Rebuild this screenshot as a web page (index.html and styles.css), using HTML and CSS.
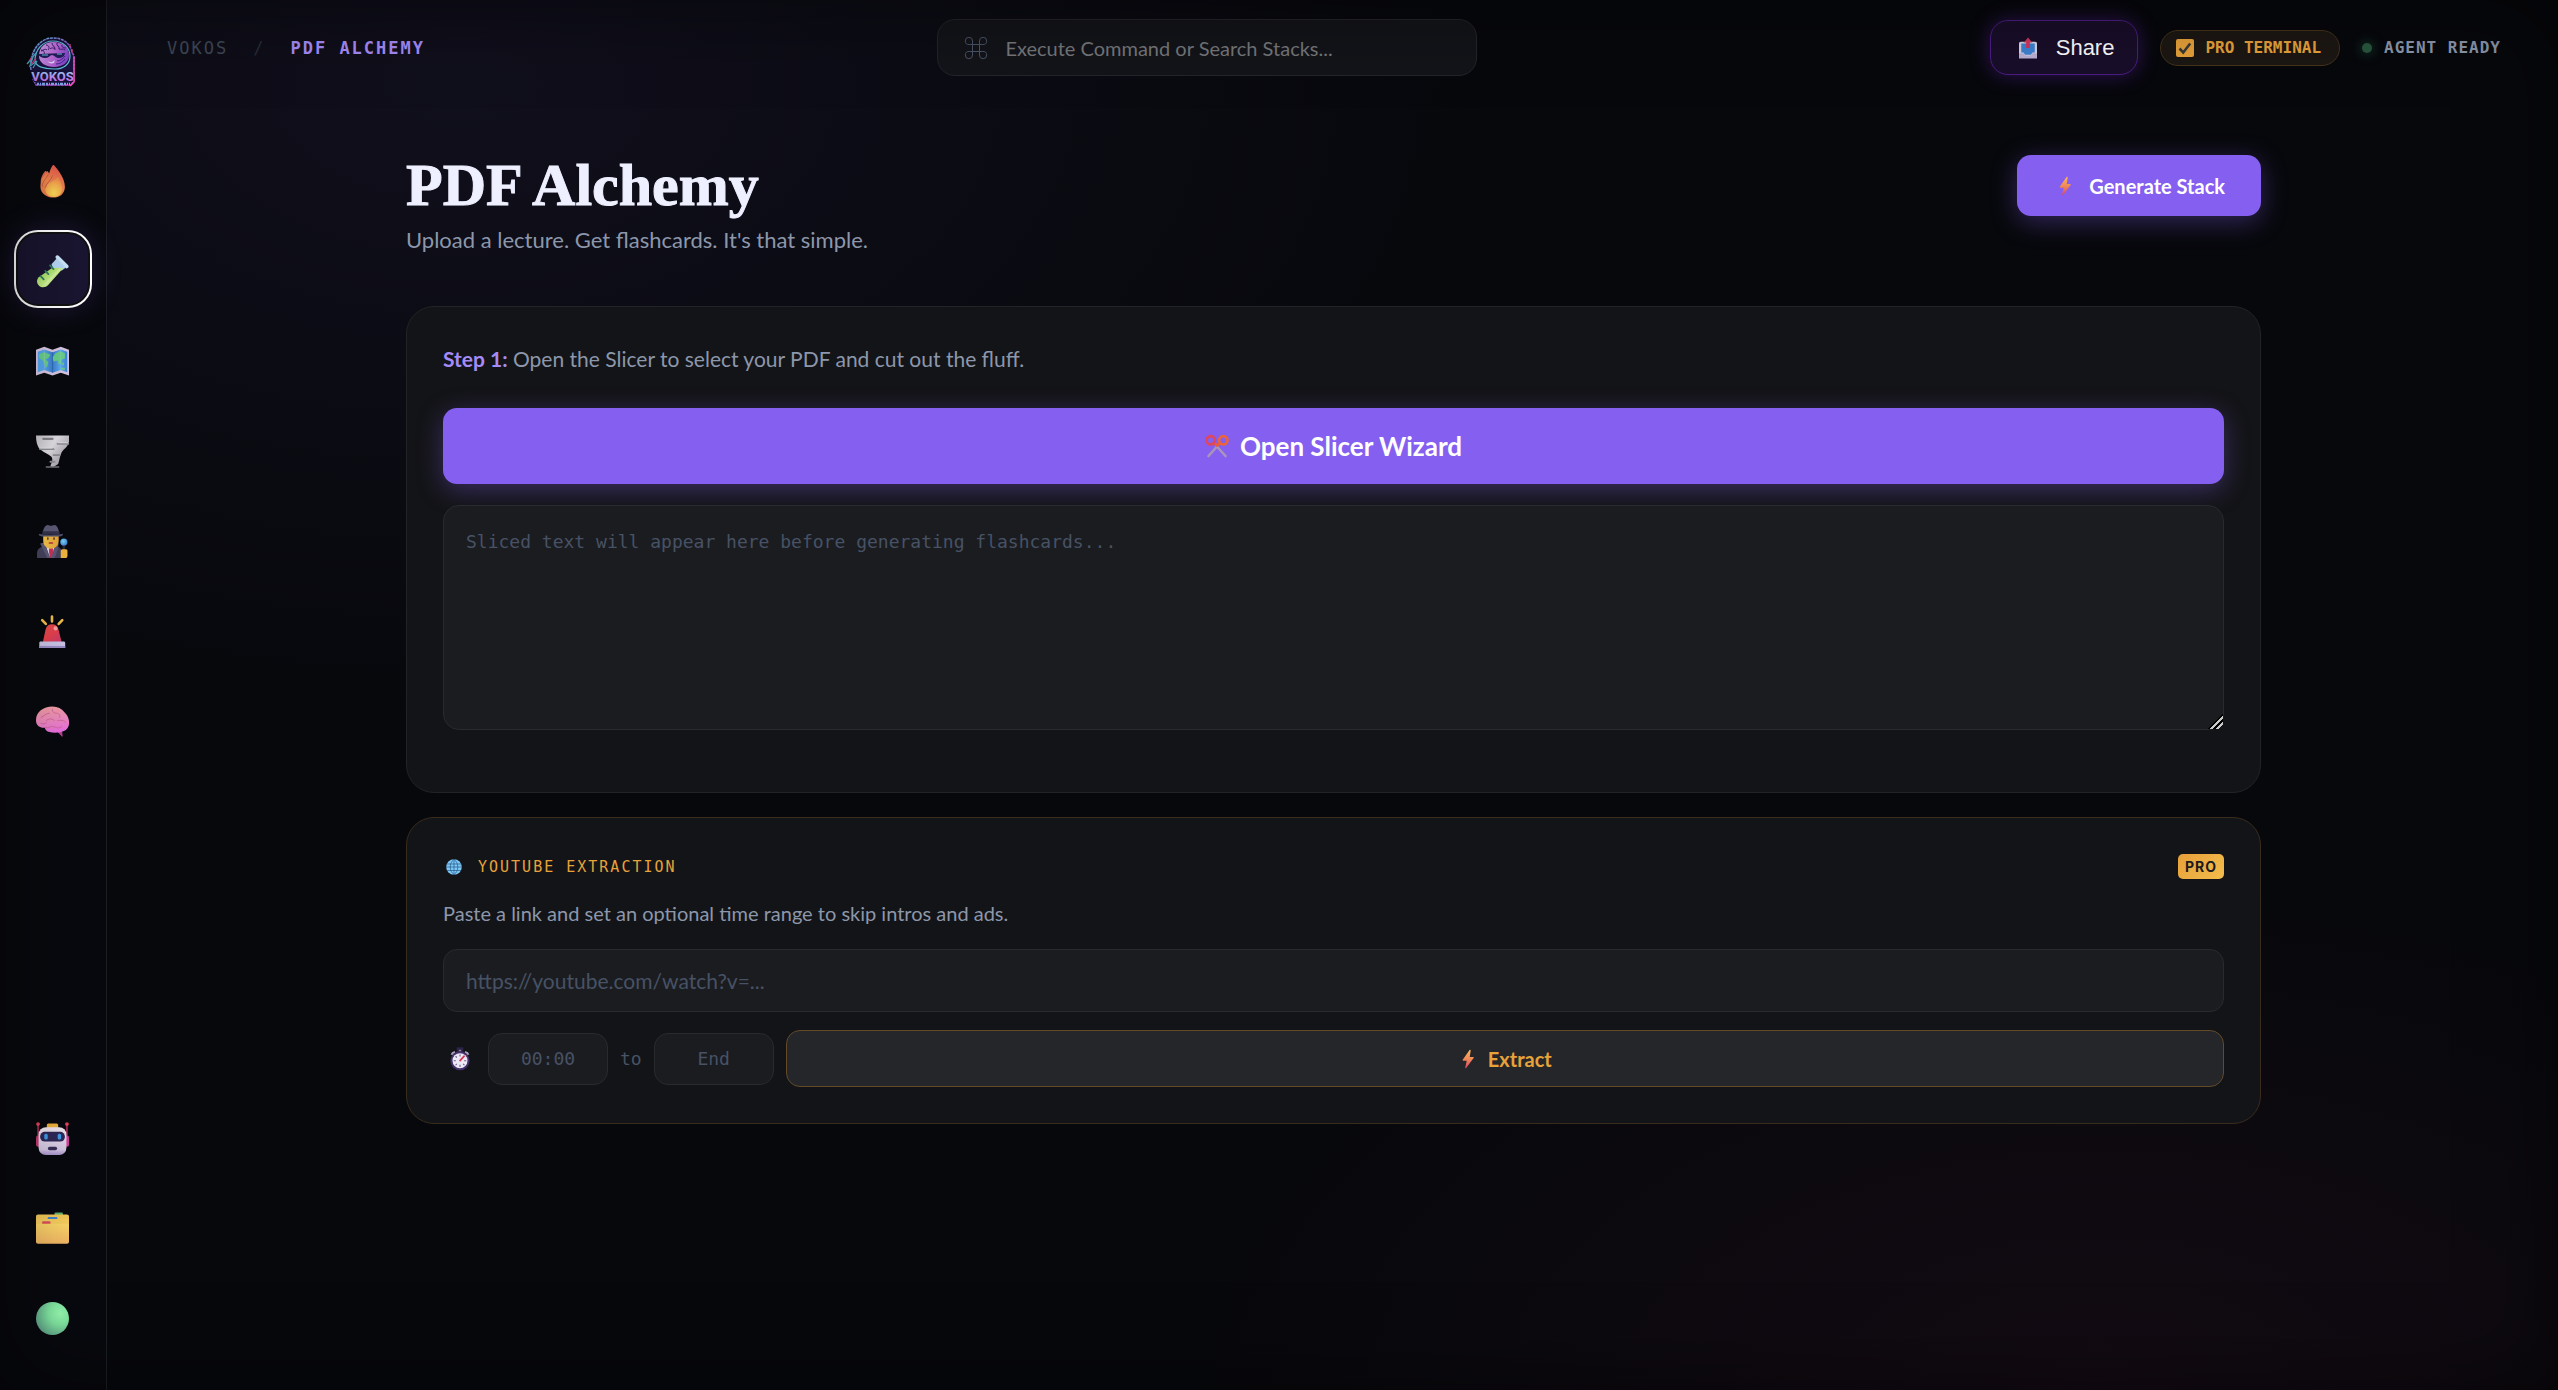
FILE: index.html
```html
<!DOCTYPE html>
<html lang="en">
<head>
<meta charset="utf-8">
<meta name="viewport" content="width=device-width, initial-scale=1">
<title>Vokos / PDF Alchemy</title>
<link rel="stylesheet" href="styles.css">
</head>
<body>
<svg class="defs" width="0" height="0" aria-hidden="true">
  <defs>
    <linearGradient id="boltFill" x1="0" y1="0" x2="0" y2="1"><stop offset="0" stop-color="#fbb85a"/><stop offset=".5" stop-color="#f08a58"/><stop offset="1" stop-color="#dc4468"/></linearGradient>
    <symbol id="bolt" viewBox="0 0 32 32"><path fill="url(#boltFill)" d="M18.500 1.500 7.500 17.300c-.4.700 0 1.400.8 1.400h5.700l-2.500 11c-.2 1.200 1 1.500 1.600.7L25 14.400c.5-.8 0-1.500-.8-1.500h-5.400l1.500-10.400c.1-1.200-1.100-1.800-1.800-1z"/></symbol>
  </defs>
</svg>
<div class="app">
  <aside class="sidebar">
    <a class="logo" href="#" aria-label="Vokos home">
      <svg viewBox="0 0 50 50" width="50" height="50">
        <defs>
          <linearGradient id="lgA" x1="0" y1="0" x2="1" y2="1"><stop offset="0" stop-color="#6fd3ec"/><stop offset=".5" stop-color="#8a62d8"/><stop offset="1" stop-color="#e23fc4"/></linearGradient>
          <linearGradient id="lgB" x1="0" y1="0" x2="1" y2=".3"><stop offset="0" stop-color="#dab0fa"/><stop offset=".6" stop-color="#c46fe2"/><stop offset="1" stop-color="#8a4cd4"/></linearGradient>
          <linearGradient id="lgC" x1="0" y1="0" x2="0" y2="1"><stop offset="0" stop-color="#9ff0ff"/><stop offset=".5" stop-color="#b49aff"/><stop offset="1" stop-color="#f05ce0"/></linearGradient>
        </defs>
        <path d="M5 33C3 27 3 20 8 11 13 3 20 1 27 1c10 0 17 5 19 14l2 4v26l-3 4H10l-3-5z" fill="#1b1442"/>
        <path d="M5 33C4 27 5 20 9 12 14 4 20 1 27 1c10 0 17 5 19 14l2 4v25l-3 4H10l-3-6" fill="none" stroke="url(#lgA)" stroke-width="1.500" stroke-dasharray="3 .7"/>
        <path d="M9 24C9 12 17 4 27 4s17 7 17 15-6 13-15 13S10 30 9 24z" fill="none" stroke="#62cbe8" stroke-width="1.200"/>
        <path d="M13 19C13 10 19 5 27 5c9 0 16 5 16 13 0 7-6 12-15 12-8 0-15-4-15-11z" fill="url(#lgB)"/>
        <path d="M15 14c3-1 4 1 3 3m2-9c3 0 4 3 2 5m4-7c0 3 3 3 3 6m2-6c-1 3 3 3 2 6m3-4c-1 2 2 3 4 3m-16 1c2-2 5-1 5 1m4-1c2 1 4-1 6 1m-24 0c2 1 4-2 6 0" fill="none" stroke="#3b1c6e"/>
        <path d="M12 17l27-1c0 3-3 5-7 5-2 0-4-3-6-3s-3 3-6 3c-5 0-7-2-8-4z" fill="#252061"/>
        <path d="M16 18h6m9-1h5" stroke="#73cfe9" stroke-width="1"/>
        <path d="M21 24c3 2 6 1 8-1l-1 3c-3 1-5 0-7-2z" fill="#e9defb"/>
        <path d="M31 24c4 0 6-3 8-5m-9 8c4 0 7-2 9-5" fill="none" stroke="#4c2491"/>
        <path d="M1 27l6-7-3 9 7-5-4 7m-2-9l5-6" fill="none" stroke="#4db9cf" stroke-width="1.200"/>
        <path d="M3 24l3-4m-1 8l5-7m34-14v3m2 2v4" stroke="#e63f86" stroke-width="1.200"/>
        <path d="M4 33h44v12H8z" fill="#17113a"/>
        <text x="26.500" y="44" text-anchor="middle" class="logo-word" fill="url(#lgC)">VOKOS</text>
        <path d="M11 47h33" stroke="#86a8ee" stroke-width="2.500" stroke-dasharray="2 1 1 1 3 1"/>
        <path d="M48 20v25l-4 4" fill="none" stroke="#f052c4" stroke-width="1.500"/>
      </svg>
    </a>
    <nav class="nav" aria-label="Tools">
      <button class="nav-btn" type="button" aria-label="Streak">
        <svg class="emoji" viewBox="0 0 32 32"><defs><linearGradient id="fi1" x1=".7" y1="0" x2=".3" y2="1"><stop offset="0" stop-color="#e4504c"/><stop offset=".55" stop-color="#ef8a4e"/><stop offset="1" stop-color="#e97b48"/></linearGradient><radialGradient id="fi2" cx=".5" cy=".8" r=".75"><stop offset="0" stop-color="#fbdc57"/><stop offset=".6" stop-color="#f8b050"/><stop offset="1" stop-color="#f08a4e"/></radialGradient></defs>
        <path fill="#d9694c" d="M8.500 6.300c.4-.6 1.400-.6 1.800.3l2.200 4.400-3 14C3 20 3.200 13 8.500 6.300z"/>
        <path fill="url(#fi1)" d="M16 .6c.5-.7 1.200-.7 1.700-.1C22 5.500 28 13 28 21c0 6.500-4.800 10.500-11 10.500S4.300 28 4.300 21c0-6 2.500-9.500 6-14.500.4-.6 1-.6 1.400 0l1 1.700C13.500 6 14.300 3 16 .6z"/>
        <path fill="url(#fi2)" d="M20.500 12c.3-.5.9-.5 1.200 0 2 3.500 3.600 6.500 3.600 10.500 0 5.500-3.600 8.500-8 8.500-4.600 0-8.300-3-8.300-7.500 0-6.500 8-6.500 11.500-11.500z"/>
        <path d="M6 21c0-5 4-8 6-12m-3 13c1-5 6-7 7-12" fill="none" stroke="#c85a45" stroke-width=".9"/></svg>
      </button>
      <button class="nav-btn is-active" type="button" aria-label="PDF Alchemy" aria-current="page">
        <svg class="emoji" viewBox="0 0 32 32"><defs><linearGradient id="tt" x1="0" y1="0" x2="1" y2="1"><stop offset="0" stop-color="#8fcf54"/><stop offset=".6" stop-color="#ccf58a"/><stop offset="1" stop-color="#b2dc70"/></linearGradient></defs>
        <path fill="#b5d8f7" d="M20 3.500l9 8.500-4 3-8-1-2-5z"/>
        <path fill="url(#tt)" d="M15.500 12.500h11L11.800 29.200C9.500 31.700 5.500 32.200 3 29.800S.3 24 2.600 21.500z"/>
        <path fill="#ecfbc5" opacity=".45" d="M22 13h3L9 30l-2-1z"/>
        <path fill="#cce7fb" d="M19 1.200c.8-1.200 2.300-1.200 3.200-.3l8.800 8.800c1 .9.700 2.300-.2 3l-1.500.3L19 3z"/>
        <path d="M4.500 20.500l3 3.200m1.500-8.400l3 3.200m1.500-8.400l3.500 3.600" stroke="#2f7d62" stroke-width="1.700" stroke-linecap="round"/></svg>
      </button>
      <button class="nav-btn" type="button" aria-label="Map">
        <svg class="emoji" viewBox="0 0 32 32"><defs><linearGradient id="mp" x1="0" y1="0" x2="1" y2="0"><stop offset="0" stop-color="#55a7f2"/><stop offset=".25" stop-color="#58a5ea"/><stop offset=".5" stop-color="#3c7fd0"/><stop offset=".75" stop-color="#5aacf5"/><stop offset="1" stop-color="#3f86db"/></linearGradient></defs>
        <path fill="#d8c8e4" d="M0 4.500l8-2.700 8 2.700 8-2.700 8 2.700v25l-8-2.700-8 2.700-8-2.700-8 2.700z"/>
        <path fill="url(#mp)" d="M1.700 6.500L8 4.300l8 2.700 8-2.700 6.300 2.200v20L24 24.300 16 27l-8-2.700-6.300 2.200z"/>
        <path fill="#69d08b" d="M3 9l5-2 6 2.500-2 3-3 1.500 3 2.500-1 4-2 2-1-5-2-3-3-2zM16 12l3-4 5-2 4 2v5l-3 1-1 4-2 1-1-4-4 1zM24 18l3-1v3zM24 22h4v2h-4z"/>
        <path d="M8 4v20m16-20v20" stroke="#fff" stroke-opacity=".15"/><path d="M16 7v20" stroke="#174c98" stroke-opacity=".35"/></svg>
      </button>
      <button class="nav-btn" type="button" aria-label="Tornado">
        <svg class="emoji" viewBox="0 0 32 32"><defs><linearGradient id="to" x1="0" y1="0" x2="1" y2=".6"><stop offset="0" stop-color="#c9c4cc"/><stop offset=".5" stop-color="#e3e0e6"/><stop offset="1" stop-color="#a19ca6"/></linearGradient></defs>
        <path fill="url(#to)" d="M0 0.500h32v6c-1 5-5 7-7 10-2 4-2 7-3.500 11.500L17 31h-2l-1-1c1-3 3-6 1-9-2-2-9-5-12-8C1 10 0 6 0 .5z"/>
        <path d="M7 3.700h9" stroke="#84848a" stroke-width="2.200" stroke-linecap="round"/>
        <path d="M21 8.500h11M4 13.700h13M17 19.500h6M14 26h4" stroke="#8f8f95" stroke-width="1.900" stroke-linecap="round"/>
        <path d="M21 7.500h10M4 12.700h12" stroke="#eceaf0" stroke-width=".8"/>
        <path d="M10 31h12" stroke="#77767c" stroke-width="1.500" stroke-linecap="round"/></svg>
      </button>
      <button class="nav-btn" type="button" aria-label="Detective">
        <svg class="emoji" viewBox="0 0 32 32"><defs><radialGradient id="mg" cx=".4" cy=".4" r=".7"><stop offset="0" stop-color="#79dcfb"/><stop offset="1" stop-color="#3a78d2"/></radialGradient><linearGradient id="fc" x1="0" y1="0" x2="1" y2="0"><stop offset="0" stop-color="#f9c94e"/><stop offset="1" stop-color="#eda93b"/></linearGradient></defs>
        <path fill="#46445f" d="M1 32v-5c0-3 2-5 5-6l2-1h12l3 2c1.500 1 2 3 2 5v5z"/>
        <path fill="#e6e6f2" d="M10 21h8l-2 11h-3z"/><path fill="#c8335c" d="M13 22h3l1 3-1 7h-2.500l-1-7z"/>
        <path fill="#5c5a78" d="M4 18l4-1 6 15h-3L7 24zM22 18l-3-1-4 15h3l3-8z"/>
        <path fill="url(#fc)" d="M7 10h15v5c0 5-3.500 8-7.500 8S7 20 7 15z"/>
        <path d="M11.500 12.500v1.200m6-1.200v1.200" stroke="#4b2c2b" stroke-width="1.400" stroke-linecap="round"/><path d="M13 17.500h3" stroke="#b6323c" stroke-width="1.500" stroke-linecap="round"/>
        <path fill="#5d5c78" d="M6.500 7c1-4 2.500-7 5-7 1.200 0 2 .8 3 .8S16.500 0 18 0c2 0 3.500 3 4.500 7z"/>
        <path fill="#35334e" d="M6.300 6h16.300l.3 3H6z"/>
        <path fill="#51506c" d="M3 8.500c4 1.200 18 1.200 23 0 .8 1-.7 2.600-3 2.600H6c-2.300 0-4-1.500-3-2.600z"/>
        <path d="M27 20v5" stroke="#2a2a3e" stroke-width="2.500"/><circle cx="27" cy="16.500" r="3.500" fill="url(#mg)"/>
        <path fill="#f2b83f" d="M24 25c0-1 1-1.500 2-1.500h3c1 0 1.500.8 1.500 1.500v5c0 1-1 2-2 2H24z"/></svg>
      </button>
      <button class="nav-btn" type="button" aria-label="Alerts">
        <svg class="emoji" viewBox="0 0 32 32"><defs><linearGradient id="si" x1="0" y1="0" x2="1" y2="1"><stop offset="0" stop-color="#e9504a"/><stop offset=".5" stop-color="#e8414e"/><stop offset="1" stop-color="#c7396e"/></linearGradient></defs>
        <path d="M15.500 1.500v4.700M6 5l3.500 3.700M25.500 5L22 8.700" stroke="#f4c04c" stroke-width="2.500" stroke-linecap="round"/>
        <path fill="url(#si)" d="M6.500 27l2.800-13c.8-3.300 3-5 6.200-5s5.500 1.700 6.300 5L25 27z"/>
        <circle cx="19" cy="13" r="2" fill="#ffb2b0" opacity=".85"/>
        <path fill="#cdc6e8" d="M4.500 25.800h22.400c.8 0 1.400.6 1.400 1.400V32H3.200v-4.800c0-.8.500-1.400 1.300-1.400z"/><path fill="#9c8fc8" d="M3.200 30h25.100v2H3.200z"/></svg>
      </button>
      <button class="nav-btn" type="button" aria-label="Brain">
        <svg class="emoji" viewBox="0 0 32 32"><defs><linearGradient id="br" x1=".3" y1="0" x2=".5" y2="1"><stop offset="0" stop-color="#f4a0a4"/><stop offset=".5" stop-color="#f08cbe"/><stop offset="1" stop-color="#ec70e2"/></linearGradient></defs>
        <path fill="#b8409a" d="M19 24l6 6.500c.5.500 1 0 .8-.6L25 23z"/>
        <path fill="url(#br)" d="M0 14.500C0 7 7 1.500 16 1.500c5 0 9 2 12 6 3 3 4.500 7 4 11-.4 4-3 6.500-7 7.500-3 1-8 1.200-12 .2-2.500-.6-4-2-4.500-4.200C4 22.500-.2 20 0 14.500z"/>
        <path d="M5 12c3-1 4-4 8-4m3-4c-1 3 2 4 4 4s4 2 3 4m-13 3c2-2 6-2 8 0m3 0c3 0 6-1 8 2m-20 5c3 1 5-2 8-1s5 2 8 0M5 18c2 1 4 0 5-1" fill="none" stroke="#d4689a" stroke-width=".9" stroke-linecap="round"/></svg>
      </button>
    </nav>
    <nav class="nav nav-bottom" aria-label="Account">
      <button class="nav-btn" type="button" aria-label="Assistant">
        <svg class="emoji" viewBox="0 0 32 32"><defs><linearGradient id="rb" x1="0" y1="0" x2="0" y2="1"><stop offset="0" stop-color="#f0e6ee"/><stop offset=".8" stop-color="#d5c8e4"/><stop offset="1" stop-color="#a893cc"/></linearGradient></defs>
        <path d="M2 2v14M30 2v14" stroke="#b02f5a" stroke-width="1.500"/><circle cx="2" cy="2" r="1.800" fill="#e6405c"/><circle cx="30" cy="2" r="1.800" fill="#e6405c"/>
        <rect x="0" y="13" width="5" height="11" rx="2" fill="#c23a72"/><rect x="27" y="13" width="5" height="11" rx="2" fill="#d2429c"/>
        <rect x="10.500" y="1.500" width="11" height="6" rx="1.500" fill="#eeb13d"/>
        <rect x="2.500" y="5" width="27" height="27" rx="7" fill="url(#rb)"/>
        <rect x="4" y="9.500" width="24" height="9.500" rx="4.500" fill="#2f2858"/>
        <rect x="8" y="11.500" width="3.400" height="5.500" rx="1.500" fill="#3f9be8"/><rect x="21" y="11.500" width="3.400" height="5.500" rx="1.500" fill="#3f9be8"/>
        <rect x="11.500" y="24" width="9" height="3.500" rx="1.700" fill="#3a2f58"/></svg>
      </button>
      <button class="nav-btn" type="button" aria-label="Files">
        <svg class="emoji" viewBox="0 0 32 32"><defs><linearGradient id="fo" x1="0" y1="0" x2="0" y2="1"><stop offset="0" stop-color="#fbd768"/><stop offset="1" stop-color="#f3b765"/></linearGradient></defs>
        <rect x="18" y="0.500" width="8" height="4" rx="1" fill="#5fb46f"/>
        <path fill="#f3c858" d="M2 2.500h28c1.200 0 2 .8 2 2V28H0V4.500c0-1.200.8-2 2-2z"/>
        <rect x="11.500" y="5" width="9" height="4" rx="1" fill="#3f86cf"/>
        <path fill="#f6cd5e" d="M0 8c0-.8.800-1.300 1.600-1.300h28.800c.9 0 1.600.5 1.600 1.300v20H0z"/>
        <rect x="6" y="9" width="8" height="4" rx="1" fill="#e0505c"/>
        <path fill="url(#fo)" d="M0 13c0-.9.700-1.600 1.600-1.600h28.800c.9 0 1.600.7 1.600 1.600v15.500c0 1.300-.9 2.200-2 2.200H2c-1.200 0-2-.9-2-2.200z"/>
        <rect x="11.500" y="5" width="9" height="1.700" fill="#3f86cf"/></svg>
      </button>
      <button class="nav-btn" type="button" aria-label="Status">
        <svg class="emoji" viewBox="0 0 32 32"><defs><radialGradient id="gc" cx=".72" cy=".35" r=".75"><stop offset="0" stop-color="#98fcb2"/><stop offset=".45" stop-color="#82e8a2"/><stop offset="1" stop-color="#62a88c"/></radialGradient></defs><circle cx="16" cy="16" r="16" fill="url(#gc)"/></svg>
      </button>
    </nav>
  </aside>

  <div class="page">
    <header class="topbar">
      <nav class="crumbs" aria-label="Breadcrumb">
        <a href="#">VOKOS</a><span class="sep">/</span><span class="here" aria-current="page">PDF ALCHEMY</span>
      </nav>
      <label class="search">
        <svg class="cmd" viewBox="0 0 24 24" aria-hidden="true"><path d="M8.500 8.500h7v7h-7zM8.500 8.500H5.200A3.600 3.600 0 1 1 8.500 5zM15.500 8.500V5a3.600 3.600 0 1 1 3.300 3.500zM15.500 15.500h3.300a3.600 3.600 0 1 1-3.300 3.500zM8.500 15.500V19a3.600 3.600 0 1 1-3.300-3.500z"/></svg>
        <input type="text" placeholder="Execute Command or Search Stacks..." aria-label="Execute command or search stacks">
      </label>
      <div class="status">
        <button class="share" type="button">
          <svg viewBox="0 0 24 28" width="18" height="22" aria-hidden="true"><path fill="#d9d5e8" d="M0 8c0-1.500 1-2.500 2.500-2.500h19C23 5.500 24 6.500 24 8v19H0z"/><path fill="#3f83d4" d="M3 8h18v12h-3l-2 3H8l-2-3H3z"/><path fill="#bcb3d6" d="M0 21h6l2 3h8l2-3h6v7H0z"/><path fill="#d5365c" d="M12 0l5.500 6.500h-3V14h-5V6.500h-3z"/></svg>
          <span>Share</span>
        </button>
        <span class="pro-pill">
          <svg viewBox="0 0 18 18" width="18" height="18" aria-hidden="true"><rect width="18" height="18" rx="2" fill="#e8a23a"/><path d="M3.500 9.500l3.700 4 7-9" fill="none" stroke="#3d3a36" stroke-width="2.600"/></svg>
          PRO TERMINAL
        </span>
        <span class="agent"><i class="dot"></i>AGENT READY</span>
      </div>
    </header>

    <main class="content">
      <div class="intro">
        <div>
          <h1>PDF Alchemy</h1>
          <p class="lead">Upload a lecture. Get flashcards. It's that simple.</p>
        </div>
        <button class="btn generate" type="button"><svg width="20" height="20" aria-hidden="true"><use href="#bolt"/></svg>Generate Stack</button>
      </div>

      <section class="card">
        <p class="step"><strong>Step 1:</strong> Open the Slicer to select your PDF and cut out the fluff.</p>
        <button class="btn slicer" type="button">
          <svg viewBox="0 0 24 24" width="24" height="24" aria-hidden="true"><path d="M12.500 12L3.500 22M11.500 12l9 10" stroke="#a895bc" stroke-width="2.600" stroke-linecap="round"/><path d="M8 8l4.500 4M16 8l-4.500 4" stroke="#ea5b3c" stroke-width="3"/><circle cx="5.700" cy="6.300" r="4.200" fill="none" stroke="#e0465c" stroke-width="2.600"/><circle cx="18.300" cy="6.300" r="4.200" fill="none" stroke="#ec6438" stroke-width="2.600"/></svg>
          Open Slicer Wizard
        </button>
        <textarea class="sliced" placeholder="Sliced text will appear here before generating flashcards..." aria-label="Sliced text"></textarea>
      </section>

      <section class="card card-pro">
        <div class="card-head">
          <h2>
            <svg viewBox="0 0 16 16" width="16" height="16" aria-hidden="true"><circle cx="8" cy="8" r="7.800" fill="#7cc8f8"/><path d="M8 0v16M1 5h14M0 8h16M1 11.500h14M8 .3C3 4 3 12 8 15.700M8 .3c5 3.700 5 11.700 0 15.400" fill="none" stroke="#1d4872" stroke-width=".6"/></svg>
            YOUTUBE EXTRACTION
          </h2>
          <span class="badge">PRO</span>
        </div>
        <p class="note">Paste a link and set an optional time range to skip intros and ads.</p>
        <input class="field url" type="url" placeholder="https://youtube.com/watch?v=..." aria-label="YouTube link">
        <div class="range">
          <svg class="watch" viewBox="0 0 24 28" width="20" height="24" aria-hidden="true"><path fill="#2e234c" d="M8 0h8v4H8z"/><path d="M12 3v4" stroke="#8a83a0" stroke-width="3"/><path d="M2 9c.5-2 2-3 4-3.500M22 9c-.5-2-2-3-4-3.500" fill="none" stroke="#a9a3bd" stroke-width="2.500"/><circle cx="12" cy="16" r="11.500" fill="#43306a"/><circle cx="12" cy="16" r="9" fill="#ece8f5"/><path d="M12 8.500v2.500m0 10v2.500M4.500 16H7m10 0h2.500M6.700 10.700l1.500 1.500m7.600 7.600l1.500 1.500m-10.600 0l1.500-1.500" stroke="#6b6483" stroke-width="1.300"/><path d="M11.500 16.500l6-6.500" stroke="#dc3553" stroke-width="2"/></svg>
          <input class="field time" type="text" placeholder="00:00" aria-label="Start time">
          <span>to</span>
          <input class="field time" type="text" placeholder="End" aria-label="End time">
          <button class="extract" type="button"><svg width="20" height="20" aria-hidden="true"><use href="#bolt"/></svg>Extract</button>
        </div>
      </section>
    </main>
  </div>
</div>
</body>
</html>
```
FILE: styles.css
```css
:root {
  --sans: "Lato", "Open Sans", sans-serif;
  --mono: "DejaVu Sans Mono", "Liberation Mono", monospace;
  --violet: #855fef;
  --lilac: #a58bf9;
  --amber: #e8a23a;
  --slate: #8c97ab;
  --dim: #475265;
  --panel: #131417;
  --well: #1b1c20;
  --line: #292a2e;
}

*, *::before, *::after { box-sizing: border-box; }

body {
  margin: 0;
  min-height: 100vh;
  background:
    radial-gradient(ellipse 40% 45% at 18% 6%, #100f1c 0%, rgba(16, 15, 28, 0) 100%),
    radial-gradient(ellipse 36% 36% at 82% 100%, #130b13 0%, rgba(19, 11, 19, 0) 100%),
    #07080c;
  background-attachment: fixed;
  font-family: var(--sans);
  color: var(--slate);
}

/* soft darkening at the window edges */
body::after {
  content: "";
  position: fixed;
  inset: 0;
  box-shadow: inset 0 0 90px rgba(0, 0, 0, .5);
  pointer-events: none;
}

h1, h2, p { margin: 0; }
button, input, textarea { font: inherit; margin: 0; }
button { cursor: pointer; }
.defs { position: absolute; }

.app { display: flex; min-height: 100vh; }

/* sidebar */
.sidebar {
  position: sticky;
  top: 0;
  flex: none;
  display: flex;
  flex-direction: column;
  align-items: center;
  width: 107px;
  height: 100vh;
  padding: 37px 0;
  background: #08090e;
  border-right: 1px solid #1e1f25;
}
.logo { display: block; height: 50px; margin-bottom: 55px; padding-right: 4px; }
.logo svg { display: block; }
.logo-word { font: bold 13px "Roboto", sans-serif; }
.nav { display: flex; flex-direction: column; gap: 16px; }
.nav-bottom { margin-top: auto; }
.nav-btn {
  display: grid;
  place-items: center;
  width: 74px;
  height: 74px;
  padding: 4px 2px 0 0;
  background: none;
  border: 0;
  border-radius: 22px;
}
.nav-btn.is-active {
  background: #1a1530;
  border: 2px solid #111113;
  box-shadow: 0 0 0 2px #fff, 0 0 32px rgba(133, 95, 239, .22);
}
.emoji { width: 33px; height: 33px; }

/* top bar */
.page { flex: 1; min-width: 0; display: flex; flex-direction: column; }
.topbar {
  display: flex;
  align-items: center;
  justify-content: space-between;
  height: 95px;
  padding: 0 57px 0 60px;
}
.crumbs {
  display: flex;
  align-items: center;
  gap: 25px;
  font: 17px/24px var(--mono);
  letter-spacing: 2px;
}
.crumbs a { color: #3f4755; text-decoration: none; }
.sep { color: #282c36; }
.here { color: var(--lilac); font-weight: bold; }
.search {
  display: flex;
  align-items: center;
  gap: 17px;
  width: 540px;
  height: 57px;
  padding: 0 26px;
  background: #131419;
  border: 1px solid #24252b;
  border-radius: 18px;
}
.cmd { flex: none; width: 24px; height: 24px; fill: none; stroke: #4a5468; stroke-width: 1; }
.search input {
  flex: 1;
  min-width: 0;
  padding: 0;
  background: none;
  border: 0;
  outline: 0;
  color: var(--slate);
  font-size: 20px;
}
.search input::placeholder { color: #75777a; opacity: 1; }
.status { display: flex; align-items: center; gap: 22px; }
.share {
  display: flex;
  align-items: center;
  gap: 19px;
  height: 55px;
  padding: 0 23px 0 28px;
  background: #190e2a;
  border: 1px solid #4c1d85;
  border-radius: 18px;
  box-shadow: 0 0 20px rgba(110, 40, 200, .4);
  color: #fff;
  font: 22px "Liberation Sans", Arial, sans-serif;
}
.pro-pill {
  display: flex;
  align-items: center;
  gap: 11px;
  height: 36px;
  padding: 0 18px 0 15px;
  background: #1c1713;
  border: 1px solid #463319;
  border-radius: 18px;
  color: var(--amber);
  font: bold 16px var(--mono);
}
.agent {
  display: flex;
  align-items: center;
  gap: 12px;
  font: bold 16px var(--mono);
  letter-spacing: 1px;
}
.dot {
  width: 10px;
  height: 10px;
  border-radius: 50%;
  background: #28573f;
  box-shadow: 0 0 12px #1d5238;
}

/* main column */
.content {
  display: flex;
  flex-direction: column;
  gap: 24px;
  width: 100%;
  max-width: 1905px;
  margin: 0 auto;
  padding: 60px 24px 60px 26px;
}
.intro {
  display: flex;
  justify-content: space-between;
  align-items: flex-start;
  margin-bottom: 26px;
}
h1 {
  margin-bottom: 9px;
  font: bold 60px/60px "Liberation Serif", "Times New Roman", serif;
  color: #eeefff;
  -webkit-text-stroke: 1px #eeefff;
}
.lead { font-size: 22px; line-height: 32px; }
.step { font-size: 21px; line-height: 32px; }
.step strong { color: var(--lilac); }
.btn {
  display: flex;
  align-items: center;
  justify-content: center;
  background: var(--violet);
  border: 0;
  border-radius: 14px;
  box-shadow: 0 6px 26px rgba(133, 95, 239, .35);
  color: #fff;
  font-weight: bold;
}
.generate { gap: 14px; height: 61px; padding: 0 36px 0 38px; font-size: 20px; }
.slicer { gap: 11px; width: 100%; height: 76px; margin: 33px 0 21px; font-size: 26px; }

.card {
  padding: 36px;
  background: var(--panel);
  border: 1px solid #222327;
  border-radius: 28px;
}
.card-pro { border-color: #3a2c1c; }
.sliced {
  display: block;
  width: 100%;
  height: 225px;
  margin-bottom: 26px;
  padding: 22px;
  background: var(--well);
  border: 1px solid var(--line);
  border-radius: 16px;
  outline: 0;
  resize: vertical;
  color: var(--slate);
  font: 18px/28px var(--mono);
}
.sliced::-webkit-resizer {
  background: linear-gradient(135deg, transparent 48%, #000 48%, #000 56%, #c9c9c9 56%, #c9c9c9 66%, #000 66%, #000 76%, #c9c9c9 76%, #c9c9c9 84%, transparent 84%);
}
.sliced::placeholder, .field::placeholder { color: var(--dim); opacity: 1; }

.card-head { display: flex; align-items: center; justify-content: space-between; height: 25px; }
h2 {
  display: flex;
  align-items: center;
  gap: 16px;
  padding-left: 3px;
  font: 15px/24px var(--mono);
  letter-spacing: 2px;
  color: var(--amber);
}
.badge {
  padding: 0 7px;
  border-radius: 5px;
  background: linear-gradient(135deg, #e8a03a, #f2bd4c);
  color: #1b1b20;
  font: bold 14px/25px "Inter", sans-serif;
  letter-spacing: 1px;
}
.note { margin: 18px 0 20px; font-size: 20px; line-height: 32px; }
.field {
  background: var(--well);
  border: 1px solid var(--line);
  border-radius: 14px;
  outline: 0;
  color: var(--slate);
}
.url { display: block; width: 100%; height: 63px; padding: 0 22px; font-size: 21px; }
.range {
  display: flex;
  align-items: center;
  gap: 12px;
  margin-top: 18px;
  font: 18px var(--mono);
  color: var(--dim);
}
.watch { flex: none; margin: 0 6px 0 7px; }
.time { width: 120px; height: 52px; padding: 0; text-align: center; }
.extract {
  flex: 1;
  display: flex;
  align-items: center;
  justify-content: center;
  gap: 10px;
  height: 57px;
  background: #25262a;
  border: 1px solid #634a29;
  border-radius: 14px;
  color: var(--amber);
  font: bold 20px var(--sans);
}
```
